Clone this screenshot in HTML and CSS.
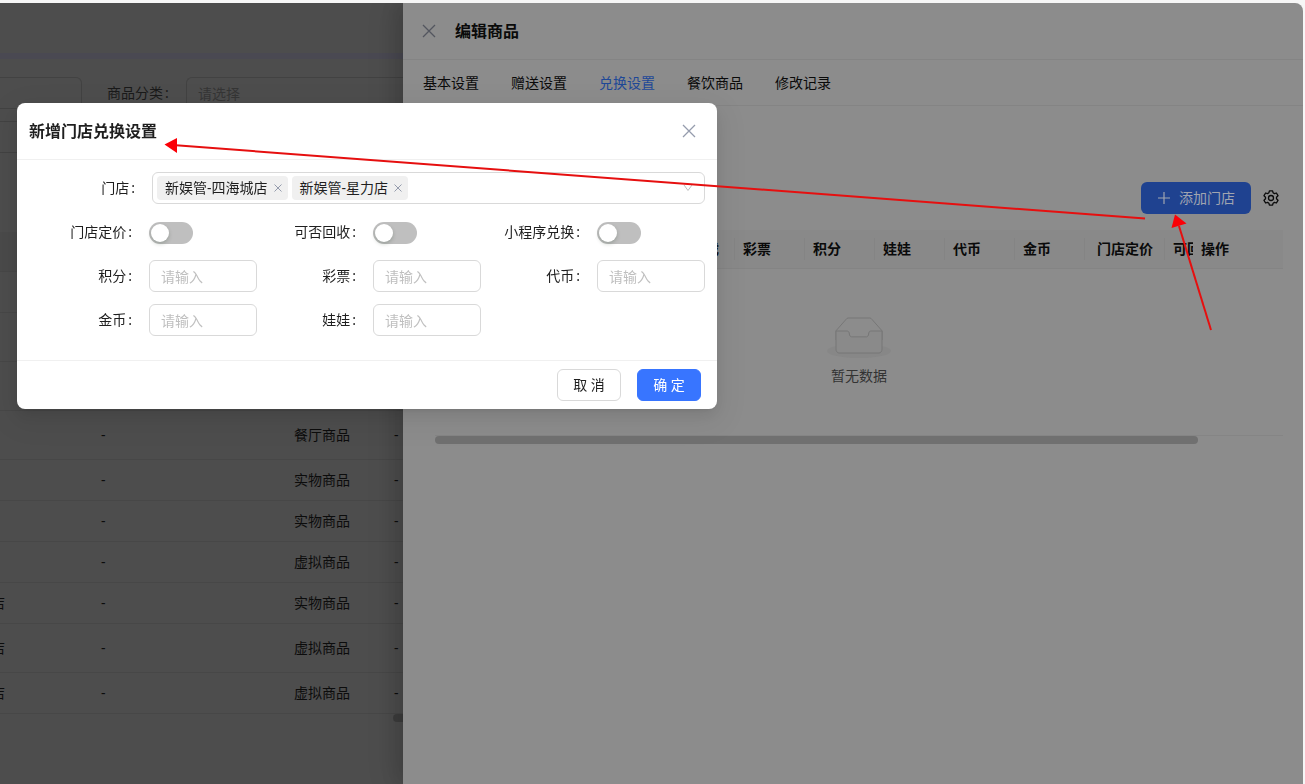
FILE: index.html
```html
<!DOCTYPE html>
<html lang="zh-CN">
<head>
<meta charset="utf-8">
<title>编辑商品</title>
<link rel="stylesheet" href="styles.css">
</head>
<body>
<div class="window">
  <main class="page">
    <div class="page-top"></div>
    <div class="page-bar"></div>
    <div class="filters">
      <input class="filter-box filter-left" type="text" aria-label="商品名称">
      <label class="filter-label" for="category">商品分类<i>:</i></label>
      <input class="filter-box filter-category" id="category" type="text" placeholder="请选择">
      <input class="filter-box filter-left" type="text" aria-label="筛选">
    </div>
    <table class="goods">
      <colgroup><col class="g1"><col class="g2"><col class="g3"><col></colgroup>
      <thead><tr><th></th><th></th><th></th><th></th></tr></thead>
      <tbody>
        <tr><td></td><td></td><td></td><td></td></tr>
        <tr class="tall"><td></td><td></td><td></td><td></td></tr>
        <tr class="tall"><td></td><td></td><td></td><td></td></tr>
        <tr class="tall"><td></td><td>-</td><td>餐厅商品</td><td>-</td></tr>
        <tr><td></td><td>-</td><td>实物商品</td><td>-</td></tr>
        <tr><td></td><td>-</td><td>实物商品</td><td>-</td></tr>
        <tr><td></td><td>-</td><td>虚拟商品</td><td>-</td></tr>
        <tr><td>店</td><td>-</td><td>实物商品</td><td>-</td></tr>
        <tr class="tall"><td>店</td><td>-</td><td>虚拟商品</td><td>-</td></tr>
        <tr><td>店</td><td>-</td><td>虚拟商品</td><td>-</td></tr>
      </tbody>
    </table>
    <div class="page-scroll"></div>
  </main>

  <section class="drawer">
    <header class="drawer-head">
      <button class="icon-btn" type="button" aria-label="关闭">
        <svg width="14" height="14" viewBox="0 0 14 14"><path d="M1 1l12 12M13 1L1 13" fill="none" stroke="#53565f" stroke-width="1.3"/></svg>
      </button>
      <h2>编辑商品</h2>
    </header>
    <nav class="tabs">
      <a href="#basic">基本设置</a>
      <a href="#gift">赠送设置</a>
      <a href="#exchange" class="active">兑换设置</a>
      <a href="#food">餐饮商品</a>
      <a href="#log">修改记录</a>
    </nav>
    <div class="drawer-body">
      <div class="toolbar">
        <button class="add-btn" type="button">
          <svg width="14" height="14" viewBox="0 0 14 14"><path d="M7 1v12M1 7h12" fill="none" stroke="currentColor" stroke-width="1.2"/></svg>
          添加门店
        </button>
        <button class="icon-btn" type="button" aria-label="列设置">
          <svg width="16" height="16" viewBox="0 0 16 16"><g fill="none" stroke="#0a0a0a" stroke-width="1.3" stroke-linejoin="round"><path d="M6.4 .8h3.2l.5 2 1.3.8 2-.6 1.6 2.7-1.5 1.5v1.6l1.5 1.5-1.6 2.7-2-.6-1.3.8-.5 2H6.4l-.5-2-1.3-.8-2 .6L1 10.300l1.500-1.500V7.200L1 5.700 2.600 3l2 .6 1.300-.8z"/><circle cx="8" cy="8" r="2.500"/></g></svg>
        </button>
      </div>
      <div class="table-wrap">
        <table class="stores">
          <colgroup><col class="s-first"><col class="s"><col class="s"><col class="s"><col class="s"><col class="s"><col class="m"><col class="m"><col class="l"></colgroup>
          <thead>
            <tr><th class="end">游戏</th><th>彩票</th><th>积分</th><th>娃娃</th><th>代币</th><th>金币</th><th class="mid">门店定价</th><th class="cut">可回</th><th class="fixed">操作</th></tr>
          </thead>
        </table>
      </div>
      <div class="empty">
        <svg width="64" height="41" viewBox="0 0 64 41"><g transform="translate(0 1)" fill="none" fill-rule="evenodd"><ellipse fill="#878787" cx="32" cy="33" rx="32" ry="7"/><g stroke="#777" fill-rule="nonzero"><path d="M55 12.760L44.854 1.258C44.367.474 43.656 0 42.907 0H21.093c-.749 0-1.460.474-1.947 1.257L9 12.761V22h46v-9.240z"/><path d="M41.613 15.931c0-1.605.994-2.930 2.227-2.931H55v18.137C55 33.260 53.680 35 52.050 35h-40.100C10.320 35 9 33.259 9 31.137V13h11.160c1.233 0 2.227 1.323 2.227 2.928v.022c0 1.605 1.005 2.901 2.237 2.901h14.752c1.232 0 2.237-1.308 2.237-2.913v-.007z" fill="#8a8a8a"/></g></g></svg>
        <p>暂无数据</p>
      </div>
      <div class="scrollbar"></div>
    </div>
  </section>
</div>

<form class="modal" role="dialog" aria-labelledby="modal-title">
  <header class="modal-head">
    <h2 id="modal-title">新增门店兑换设置</h2>
    <button class="icon-btn" type="button" aria-label="关闭">
      <svg width="14" height="14" viewBox="0 0 14 14"><path d="M1 1l12 12M13 1L1 13" fill="none" stroke="#959cad" stroke-width="1.300"/></svg>
    </button>
  </header>
  <div class="modal-body">
    <div class="field wide">
      <label for="stores">门店<i>:</i></label>
      <div class="select">
        <span class="tag">新娱管-四海城店<button type="button" aria-label="移除"><svg width="8" height="8" viewBox="0 0 8 8"><path d="M.5.5l7 7M7.500.500l-7 7" stroke="#959cad" fill="none"/></svg></button></span>
        <span class="tag">新娱管-星力店<button type="button" aria-label="移除"><svg width="8" height="8" viewBox="0 0 8 8"><path d="M.5.5l7 7M7.500.500l-7 7" stroke="#959cad" fill="none"/></svg></button></span>
        <input id="stores" type="text" role="combobox" aria-expanded="false">
        <svg width="10" height="8" viewBox="0 0 10 8"><path d="M1 1l4 5.500L9 1" fill="none" stroke="#bfbfbf"/></svg>
      </div>
    </div>
    <div class="field"><label for="price">门店定价<i>:</i></label><div class="control"><input class="switch" id="price" type="checkbox" role="switch"></div></div>
    <div class="field"><label for="recycle">可否回收<i>:</i></label><div class="control"><input class="switch" id="recycle" type="checkbox" role="switch"></div></div>
    <div class="field"><label for="mini">小程序兑换<i>:</i></label><div class="control"><input class="switch" id="mini" type="checkbox" role="switch"></div></div>
    <div class="field"><label for="points">积分<i>:</i></label><div class="control"><input class="text" id="points" type="text" placeholder="请输入"></div></div>
    <div class="field"><label for="ticket">彩票<i>:</i></label><div class="control"><input class="text" id="ticket" type="text" placeholder="请输入"></div></div>
    <div class="field"><label for="token">代币<i>:</i></label><div class="control"><input class="text" id="token" type="text" placeholder="请输入"></div></div>
    <div class="field"><label for="gold">金币<i>:</i></label><div class="control"><input class="text" id="gold" type="text" placeholder="请输入"></div></div>
    <div class="field"><label for="doll">娃娃<i>:</i></label><div class="control"><input class="text" id="doll" type="text" placeholder="请输入"></div></div>
  </div>
  <footer class="modal-foot">
    <button class="btn" type="button">取 消</button>
    <button class="btn primary" type="submit">确 定</button>
  </footer>
</form>

<svg class="arrows" width="1305" height="784" viewBox="0 0 1305 784" aria-hidden="true">
  <g stroke="#e60f0f" stroke-width="2"><path d="M1145 218.500L176 145.300"/><path d="M1211 330L1179 226"/></g>
  <g fill="#fb0007"><path d="M164.500 144.500L177 138v15z"/><path d="M1175 214.500l11.500 9-15 4.500z"/></g>
</svg>
</body>
</html>
```
FILE: styles.css
```css
* { box-sizing: border-box; }

body {
  margin: 0;
  padding: 3px 2px 0 0;
  background: #f6f6f6;
  color: #1f1f1f;
  font: 14px/22px "Noto Sans", "Noto Sans CJK SC", sans-serif;
}

h2, p { margin: 0; }
h2 { font-size: 16px; line-height: 24px; font-weight: 700; }
button, input { font: inherit; color: inherit; }
button { cursor: pointer; }
svg { display: block; flex: none; }
label i { margin-left: 2px; font-style: normal; }

.icon-btn { padding: 0; border: 0; background: none; }

.window {
  display: grid;
  grid-template-columns: minmax(0, 1fr) 900px;
  min-height: calc(100vh - 3px);
  border-top-right-radius: 8px;
  overflow: hidden;
}

/* dimmed list page */
.page { background: #4d4d4d; color: #0c0c0c; overflow: hidden; }
.page-top { height: 50px; }
.page-bar { height: 6px; background: #4a4952; }

.filters {
  display: grid;
  grid-template-columns: 82px 104px 1fr;
  gap: 12px 0;
  padding: 18px 0 0;
}
.filter-box {
  width: 100%;
  height: 32px;
  padding: 0 11px;
  border: 1px solid #424242;
  border-radius: 6px;
  background: none;
}
.filter-left { border-left: 0; border-radius: 0 6px 6px 0; }
.filter-category { border-right: 0; border-radius: 6px 0 0 6px; }
.filter-box::placeholder { color: #353535; opacity: 1; }
.filter-label { padding-left: 25px; line-height: 32px; color: #1a1a1a; }

.goods {
  width: 440px;
  margin: 79px 0 0 -17px;
  table-layout: fixed;
  border-collapse: separate;
  border-spacing: 0;
}
.g1 { width: 110px; }
.g2 { width: 193px; }
.g3 { width: 100px; }
.goods th { height: 40px; padding: 0; background: #4a4a4a; border-bottom: 1px solid #474747; }
.goods td { height: 41px; padding: 0 8px; border-bottom: 1px solid #474747; }
.goods .tall td { height: 49px; }
.page-scroll {
  width: 10px;
  height: 8px;
  margin-left: auto;
  border-radius: 4px 0 0 4px;
  background: #3d3d3d;
}

/* drawer */
.drawer {
  background: #8c8c8c;
  color: #0a0a0a;
  box-shadow: -6px 0 16px rgba(0, 0, 0, .1), -9px 0 28px rgba(0, 0, 0, .1);
}
.drawer-head {
  display: flex;
  align-items: center;
  gap: 19px;
  height: 57px;
  padding: 0 19px;
  border-bottom: 1px solid #848484;
}
.tabs {
  display: flex;
  gap: 32px;
  padding: 12px 20px 11px;
  border-bottom: 1px solid #848484;
}
.tabs a { color: inherit; text-decoration: none; }
.tabs .active { color: #1e4897; }

.drawer-body { padding: 76px 20px 0 32px; }
.toolbar {
  display: flex;
  justify-content: flex-end;
  align-items: center;
  gap: 12px;
  padding-right: 4px;
}
.add-btn {
  display: flex;
  align-items: center;
  gap: 8px;
  height: 32px;
  padding: 0 16px;
  border: 0;
  border-radius: 6px;
  background: #1f4290;
  color: #a0a5b0;
}
.table-wrap { margin-top: 16px; overflow: hidden; }
.stores {
  width: 900px;
  table-layout: fixed;
  border-collapse: separate;
  border-spacing: 0;
}
.s-first { width: 300px; }
.s { width: 70px; }
.m { width: 80px; }
.l { width: 90px; }
.stores th {
  height: 39px;
  padding: 0 8px;
  background: linear-gradient(#848484, #848484) right center / 1px 22px no-repeat #898989;
  border-bottom: 1px solid #848484;
  font-weight: 700;
  text-align: left;
  white-space: nowrap;
}
.stores .end { padding-right: 16px; text-align: right; }
.stores .mid { padding: 0; text-align: center; }
.stores .cut { background: #898989; }
.stores .fixed { position: sticky; right: 0; background: #898989; }

.empty {
  display: flex;
  flex-direction: column;
  align-items: center;
  gap: 7px;
  padding: 48px 0 48px;
  border-bottom: 1px solid #858585;
  color: #333;
}
.scrollbar { width: 90%; height: 8px; border-radius: 4px; background: #707070; }

/* modal */
.modal {
  position: absolute;
  left: 17px;
  top: 103px;
  width: 700px;
  border-radius: 8px;
  background: #fff;
  box-shadow: 0 6px 16px rgba(0, 0, 0, .08), 0 3px 6px -4px rgba(0, 0, 0, .12), 0 9px 28px 8px rgba(0, 0, 0, .05);
}
.modal-head {
  display: flex;
  align-items: center;
  justify-content: space-between;
  height: 57px;
  padding: 0 21px 0 12px;
  border-bottom: 1px solid #f0f0f0;
}
.modal-body {
  display: grid;
  grid-template-columns: repeat(3, 1fr);
  gap: 12px 0;
  padding: 12px 12px 24px 16px;
}
.field { display: flex; align-items: center; min-height: 32px; }
.field label { flex: 1; padding-right: 17px; text-align: right; }
.wide { grid-column: 1 / -1; }
.wide label { flex: 0 0 119px; }
.control { display: flex; width: 108px; }

.text {
  width: 100%;
  height: 32px;
  padding: 0 11px;
  border: 1px solid #d9d9d9;
  border-radius: 6px;
  background: #fff;
}
.text::placeholder { color: #bfbfbf; opacity: 1; }

.select {
  display: flex;
  flex: 1;
  align-items: center;
  gap: 4px;
  height: 32px;
  padding: 0 11px 0 4px;
  border: 1px solid #d9d9d9;
  border-radius: 6px;
}
.select input { flex: 1; min-width: 0; border: 0; outline: 0; background: none; }
.tag {
  display: flex;
  align-items: center;
  gap: 6px;
  height: 24px;
  padding: 0 6px 0 8px;
  border-radius: 4px;
  background: #f0f0f0;
}
.tag button { padding: 0; border: 0; background: none; }

.switch {
  appearance: none;
  width: 44px;
  height: 22px;
  margin: 1px 0 0;
  padding: 2px;
  border-radius: 11px;
  background: #bfbfbf;
}
.switch::before {
  content: "";
  display: block;
  width: 18px;
  height: 18px;
  border-radius: 50%;
  background: #fff;
  box-shadow: 0 2px 4px rgba(0, 35, 11, .2);
}

.modal-foot {
  display: flex;
  justify-content: flex-end;
  gap: 16px;
  padding: 8px 16px;
  border-top: 1px solid #f0f0f0;
}
.btn {
  width: 64px;
  height: 32px;
  padding: 0;
  border: 1px solid #d9d9d9;
  border-radius: 6px;
  background: #fff;
}
.primary { border-color: #3875ff; background: #3875ff; color: #fff; }

.arrows { position: absolute; left: 0; top: 0; pointer-events: none; }
```
